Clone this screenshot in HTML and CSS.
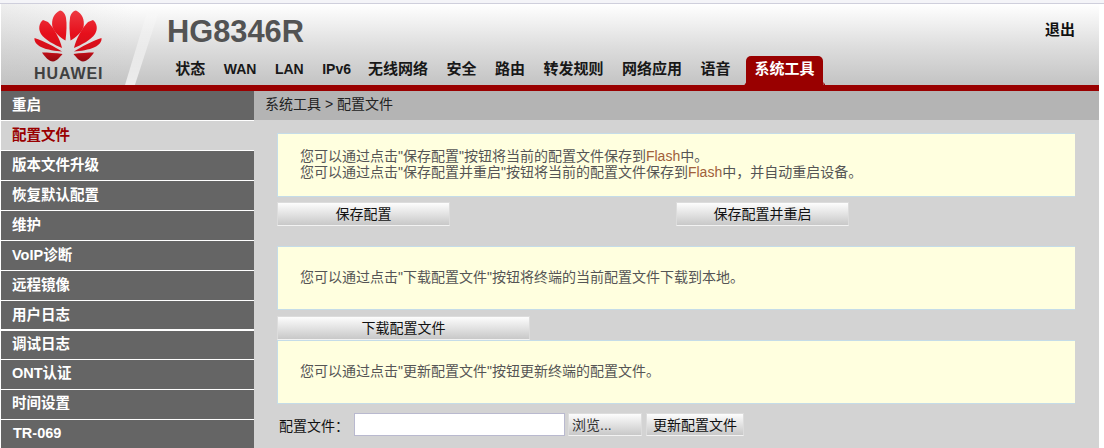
FILE: index.html
```html
<!DOCTYPE html>
<html lang="zh">
<head>
<meta charset="utf-8">
<title>HG8346R</title>
<link rel="stylesheet" href="styles.css">
</head>
<body>
<div class="topline"></div>
<div class="page">
  <header class="header">
    <div class="logo">
      <svg class="logo-mark" width="68" height="54" viewBox="34 10 68 54" aria-hidden="true">
        <defs>
          <linearGradient id="petal" gradientUnits="userSpaceOnUse" x1="0" y1="10" x2="0" y2="62">
            <stop offset="0" stop-color="#ee3a42"/>
            <stop offset=".45" stop-color="#e6101c"/>
            <stop offset=".75" stop-color="#d40f1a"/>
            <stop offset="1" stop-color="#8e0a10"/>
          </linearGradient>
        </defs>
        <g fill="url(#petal)">
          <path d="M60 10.500C54 13 51 20 52.500 27C54.500 33 61 38 65.500 40.500C66.500 32 67 24 66 18C65.500 14 63 11 60 10.500Z"/>
          <path d="M43 20C39 23 38 29 41 34C45 40 55 45 62 48C60 39 54 28 48 22Z"/>
          <path d="M34.500 38C34 42 37 45 41 47C47 50 56 51 62 51.500C55 47 44 41 34.500 38Z"/>
          <path d="M42 52.500C45 57 49 61.500 53 61.500C57 61 60 57 62.500 54C56 53 48 52.500 42 52.500Z"/>
          <path d="M76 10.500C82 13 85 20 83.500 27C81.500 33 75 38 70.500 40.500C69.500 32 69 24 70 18C70.500 14 73 11 76 10.500Z"/>
          <path d="M93 20C97 23 98 29 95 34C91 40 81 45 74 48C76 39 82 28 88 22Z"/>
          <path d="M101.500 38C102 42 99 45 95 47C89 50 80 51 74 51.500C81 47 92 41 101.500 38Z"/>
          <path d="M94 52.500C91 57 87 61.500 83 61.500C79 61 76 57 73.500 54C80 53 88 52.500 94 52.500Z"/>
        </g>
      </svg>
      <div class="logo-text">HUAWEI</div>
      <div class="stripe"></div>
    </div>
    <div class="head-main">
      <div class="head-top">
        <h1 class="model">HG8346R</h1>
        <a class="logout">退出</a>
      </div>
      <nav class="nav">
        <a class="nav-item">状态</a>
        <a class="nav-item nav-latin">WAN</a>
        <a class="nav-item nav-latin">LAN</a>
        <a class="nav-item nav-latin nav-ipv6">IPv6</a>
        <a class="nav-item">无线网络</a>
        <a class="nav-item">安全</a>
        <a class="nav-item">路由</a>
        <a class="nav-item">转发规则</a>
        <a class="nav-item">网络应用</a>
        <a class="nav-item">语音</a>
        <a class="nav-item nav-active">系统工具</a>
      </nav>
    </div>
  </header>
  <div class="redbar"></div>
  <div class="body-row">
    <aside class="side">
      <a class="side-item">重启</a>
      <a class="side-item side-active">配置文件</a>
      <a class="side-item">版本文件升级</a>
      <a class="side-item">恢复默认配置</a>
      <a class="side-item">维护</a>
      <a class="side-item">VoIP诊断</a>
      <a class="side-item">远程镜像</a>
      <a class="side-item side-thick">用户日志</a>
      <a class="side-item side-short">调试日志</a>
      <a class="side-item side-low">ONT认证</a>
      <a class="side-item side-low">时间设置</a>
      <a class="side-item side-low side-tr">TR-069</a>
    </aside>
    <main class="main">
      <div class="crumb">系统工具 &gt; 配置文件</div>
      <div class="content">
        <div class="note">
          <p>您可以通过点击"保存配置"按钮将当前的配置文件保存到<span class="flash">Flash</span>中。</p>
          <p>您可以通过点击"保存配置并重启"按钮将当前的配置文件保存到<span class="flash">Flash</span>中，并自动重启设备。</p>
        </div>
        <div class="btn-row">
          <button class="btn btn-save">保存配置</button>
          <button class="btn btn-save">保存配置并重启</button>
        </div>
        <div class="note">
          <p>您可以通过点击"下载配置文件"按钮将终端的当前配置文件下载到本地。</p>
        </div>
        <button class="btn btn-download">下载配置文件</button>
        <div class="note">
          <p>您可以通过点击"更新配置文件"按钮更新终端的配置文件。</p>
        </div>
        <div class="form-row">
          <label class="form-label">配置文件：</label>
          <input class="file-input" type="text">
          <button class="btn btn-browse">浏览...</button>
          <button class="btn btn-update">更新配置文件</button>
        </div>
      </div>
    </main>
  </div>
</div>
</body>
</html>
```

FILE: styles.css
```css
html, body {
  margin: 0;
  padding: 0;
  height: 448px;
  overflow: hidden;
  background: #fff;
  font-family: "Liberation Sans", "Noto Sans CJK SC", sans-serif;
}
.topline {
  height: 3px;
  border-bottom: 1px solid #cfcfdc;
  background: #f4f4f8;
}
.page {
  width: 1098px;
  margin-left: 1px;
}
.header {
  display: flex;
  height: 81px;
  background: linear-gradient(#ffffff 0%, #dcdcdc 55%, #c3c3c3 100%);
}
.logo {
  position: relative;
  width: 166px;
  flex: none;
  display: flex;
  flex-direction: column;
  background: linear-gradient(100deg, rgba(190,190,190,.25), rgba(255,255,255,0) 75%);
}
.logo-mark {
  display: block;
  margin: 6px 0 0 33px;
}
.logo-text {
  margin: 3px 0 0 33px;
  font-size: 16px;
  line-height: 13px;
  font-weight: bold;
  letter-spacing: .9px;
  color: #404040;
}
.stripe {
  position: absolute;
  left: 124px;
  top: 10px;
  width: 33px;
  height: 71px;
  background: linear-gradient(rgba(255,255,255,.15), rgba(255,255,255,.7));
  clip-path: polygon(65% 0, 100% 0, 30% 100%, 0 100%);
}
.head-main {
  flex: 1;
  display: flex;
  flex-direction: column;
}
.head-top {
  display: flex;
  justify-content: space-between;
  height: 52px;
}
.model {
  margin: 10px 0 0;
  font-size: 30.800px;
  line-height: 36px;
  font-weight: bold;
  color: #535353;
}
.logout {
  margin: 14px 24px 0 0;
  font-size: 15px;
  line-height: 24px;
  font-weight: bold;
  color: #111;
}
.nav {
  display: flex;
  align-items: flex-end;
  height: 29px;
  margin-left: -1px;
}
.nav-item {
  padding: 0 9.250px;
  height: 29px;
  line-height: 26px;
  font-size: 15px;
  font-weight: bold;
  color: #181818;
  white-space: nowrap;
}
.nav-latin {
  font-size: 14px;
}
.nav-ipv6 {
  margin-right: -1.500px;
}
.nav-active {
  position: relative;
  margin-left: 6.500px;
  padding: 0 9px 0 8px;
  height: 29px;
  line-height: 26px;
  color: #fff;
  background: #990000;
  border-radius: 5px 5px 0 0;
}
.nav-active::before,
.nav-active::after {
  content: "";
  position: absolute;
  bottom: 0;
  width: 2px;
  height: 3px;
  background: #990000;
}
.nav-active::before {
  left: -2px;
  clip-path: polygon(100% 0, 100% 100%, 0 100%);
}
.nav-active::after {
  right: -2px;
  clip-path: polygon(0 0, 100% 100%, 0 100%);
}
.redbar {
  height: 6px;
  background: #990000;
}
.body-row {
  display: flex;
}
.side {
  width: 253px;
  flex: none;
}
.side-item {
  display: block;
  height: 29px;
  line-height: 28px;
  padding-left: 11px;
  border-bottom: 1px solid #fff;
  background: #656565;
  color: #fff;
  font-size: 14.500px;
  font-weight: bold;
}
.side-active {
  background: #d3d3d3;
  color: #990000;
}
.side-thick {
  height: 28px;
  border-bottom-width: 2px;
}
.side-short {
  height: 28px;
  line-height: 27px;
}
.side-low {
  line-height: 27px;
}
.side-tr {
  padding-left: 12px;
}
.main {
  flex: 1;
  background: #d3d3d3;
  height: 357px;
}
.crumb {
  height: 29px;
  line-height: 27px;
  padding-left: 11px;
  background: #b4b4b4;
  font-size: 14px;
  color: #222;
}
.content {
  padding: 13px 24px 0 23px;
}
.note {
  box-sizing: border-box;
  height: 64px;
  width: 798px;
  display: flex;
  flex-direction: column;
  justify-content: center;
  padding: 0 0 2px 22px;
  background: #ffffdf;
  border: solid #c5dce8;
  border-width: 1px 0 1px 1px;
  color: #555;
  font-size: 14px;
  line-height: 16px;
}
.note p {
  margin: 0;
}
.flash {
  color: #a0603a;
}
.btn-row {
  display: flex;
  gap: 226px;
  margin: 5px 0 20px;
}
.btn {
  box-sizing: border-box;
  display: block;
  height: 24px;
  padding: 0;
  border: 1px solid #dcdcdc;
  border-bottom-color: #f2f2f2;
  background: linear-gradient(#fdfdfd, #c8c8c8);
  color: #111;
  font-family: inherit;
  font-size: 14px;
  line-height: 20px;
}
.btn-save {
  width: 173px;
}
.btn-download {
  width: 253px;
  margin: 6px 0 0;
}
.form-row {
  display: flex;
  align-items: flex-start;
  margin-top: 9px;
}
.form-label {
  width: 75px;
  padding-left: 2px;
  font-size: 14px;
  line-height: 26px;
  color: #111;
}
.file-input {
  box-sizing: border-box;
  width: 211px;
  height: 23px;
  padding: 0;
  border: 1px solid #b9b9cf;
  background: #fff;
}
.btn-browse {
  width: 74px;
  height: 23px;
  margin-left: 3px;
  padding-left: 3px;
  text-align: left;
  color: #333;
}
.btn-update {
  width: 98px;
  height: 23px;
  margin-left: 4px;
}
```
